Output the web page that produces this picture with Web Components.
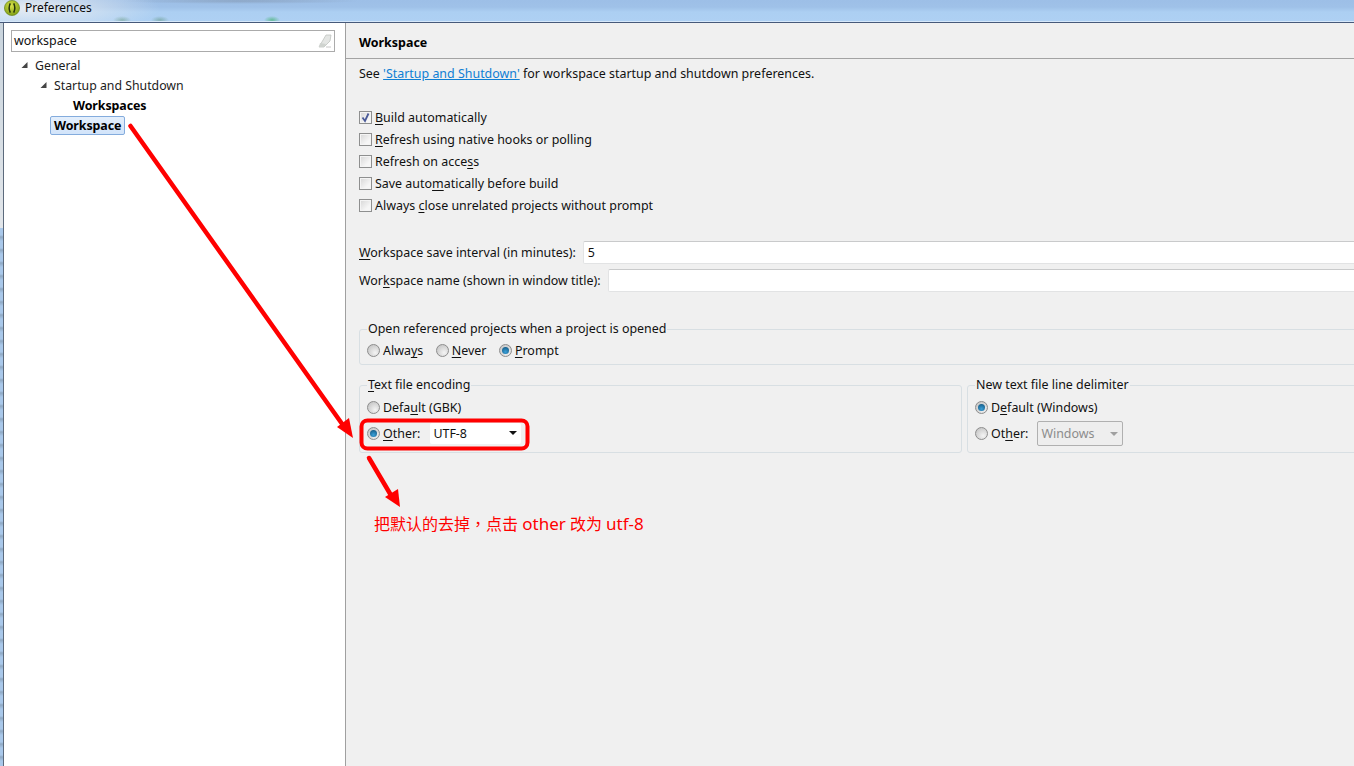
<!DOCTYPE html>
<html>
<head>
<meta charset="utf-8">
<title>Preferences</title>
<style>
html, body { margin: 0; height: 100%; overflow: hidden; background: #f0f0f0; }
body { font: 12.44px "Noto Sans", "Noto Sans CJK SC", sans-serif; color: #111; }
</style>
</head>
<body>
<pref-window>
    <title-bar slot="title">Preferences</title-bar>
    <tree-pane slot="tree">
        <tree-item depth="0" arrow>General</tree-item>
        <tree-item depth="1" arrow>Startup and Shutdown</tree-item>
        <tree-item depth="2" bold>Workspaces</tree-item>
        <tree-item depth="1" bold selected>Workspace</tree-item>
    </tree-pane>
    <pref-page slot="page" heading="Workspace">
        <div class="desc">See <a>'Startup and Shutdown'</a> for workspace startup and shutdown preferences.</div>
        <div class="checks">
            <check-row checked><u>B</u>uild automatically</check-row>
            <check-row><u>R</u>efresh using native hooks or polling</check-row>
            <check-row>Refresh on acce<u>s</u>s</check-row>
            <check-row>Save auto<u>m</u>atically before build</check-row>
            <check-row>Always <u>c</u>lose unrelated projects without prompt</check-row>
        </div>
        <div class="fields">
            <field-row value="5"><u>W</u>orkspace save interval (in minutes):</field-row>
            <field-row>Wor<u>k</u>space name (shown in window title):</field-row>
        </div>
        <group-box label="Open referenced projects when a project is opened" class="open-group">
            <div class="inline">
                <radio-row>Alwa<u>y</u>s</radio-row>
                <radio-row><u>N</u>ever</radio-row>
                <radio-row checked><u>P</u>rompt</radio-row>
            </div>
        </group-box>
        <div class="pair">
            <group-box label="Text file encoding" mnemonic="T">
                <radio-row class="top">Defa<u>u</u>lt (GBK)</radio-row>
                <div class="other enc">
                    <radio-row checked><u>O</u>ther:</radio-row>
                    <combo-box value="UTF-8"></combo-box>
                </div>
            </group-box>
            <group-box label="New text file line delimiter">
                <radio-row class="top" checked>D<u>e</u>fault (Windows)</radio-row>
                <div class="other delim">
                    <radio-row>Ot<u>h</u>er:</radio-row>
                    <combo-box value="Windows" disabled></combo-box>
                </div>
            </group-box>
        </div>
    </pref-page>
    <note-overlay slot="overlay">把默认的去掉<span style='font-family:"Noto Sans CJK TC",sans-serif'>，</span>点击 <span style="font-size:17px">other</span> 改为 <span style="font-size:17px">utf-8</span></note-overlay>
</pref-window>

<script>
class PrefWindow extends HTMLElement {
    constructor() {
        super();
        this.attachShadow({ mode: 'open' }).innerHTML = `
            <style>
            :host {
                display: grid;
                grid-template-rows: 22px 1px 1fr;
                height: 766px;
                width: 1354px;
                position: relative;
                overflow: hidden;
            }
            .rule { background: #46597a; }
            .body {
                display: grid;
                grid-template-columns: 3px 1px 341px 1px 1fr;
                min-height: 0;
            }
            .frame {
                background:
                    repeating-linear-gradient(180deg, #a9c8ea 0 7px, #8fa9c4 9px, #a9c8ea 13px) 0 205px no-repeat,
                    linear-gradient(180deg, #c9d4dd, #e2e6ea);
                background-size: 100% 100%, 100% 205px;
            }
            .line { background: #5c6a7c; }
            .sash { background: #a0a0a0; }
            </style>
            <slot name="title"></slot>
            <div class="rule"></div>
            <div class="body">
                <div class="frame"></div>
                <div class="line"></div>
                <slot name="tree"></slot>
                <div class="sash"></div>
                <slot name="page"></slot>
            </div>
            <slot name="overlay"></slot>
        `;
    }
}

class TitleBar extends HTMLElement {
    constructor() {
        super();
        this.attachShadow({ mode: 'open' }).innerHTML = `
            <style>
            :host {
                display: flex;
                align-items: center;
                gap: 5px;
                padding: 0 0 6px 4px;
                box-sizing: border-box;
                height: 22px;
                color: #0c0c0c;
                font-size: 12px;
                border-bottom: 1px solid #d6e8fa;
                background:
                    radial-gradient(ellipse 130px 26px at 30px 8px, rgba(238,240,242,.9), rgba(238,240,242,0)),
                    radial-gradient(ellipse 9px 4px at 122px 20px, rgba(70,130,90,.45), rgba(70,130,90,0)),
                    radial-gradient(ellipse 9px 4px at 160px 20px, rgba(70,130,90,.4), rgba(70,130,90,0)),
                    radial-gradient(ellipse 8px 4px at 272px 20px, rgba(40,170,80,.55), rgba(40,170,80,0)),
                    radial-gradient(ellipse 120px 3px at 240px 1px, rgba(110,120,135,.35), rgba(110,120,135,0)),
                    linear-gradient(180deg, #9dbfe7 0, #9fc1e8 7px, #accff2 12px, #aed0f3 100%);
            }
            svg { flex: none; }
            </style>
            <svg width="16" height="16" viewBox="0 0 16 16">
                <defs>
                    <radialGradient id="g" cx="45%" cy="35%" r="65%">
                        <stop offset="0" stop-color="#d8e24a"/>
                        <stop offset="1" stop-color="#7f9e14"/>
                    </radialGradient>
                </defs>
                <circle cx="8" cy="8" r="7.6" fill="url(#g)" stroke="#5f7d12" stroke-width=".6"/>
                <path d="M6.3 3.4Q4 8 6.3 12.6M9.7 3.4Q12 8 9.7 12.6" fill="none" stroke="#26340a" stroke-width="1.5"/>
            </svg>
            <span><slot></slot></span>
        `;
    }
}

class TreePane extends HTMLElement {
    constructor() {
        super();
        this.attachShadow({ mode: 'open' }).innerHTML = `
            <style>
            :host {
                display: block;
                background: #fff;
                padding: 7px 10px 0 7px;
                box-sizing: border-box;
                min-height: 0;
            }
            .search {
                display: flex;
                align-items: center;
                justify-content: space-between;
                height: 22px;
                box-sizing: border-box;
                border: 1px solid #ababab;
                padding: 0 2px 1px 2px;
                margin-bottom: 3px;
                color: #111;
            }
            svg { display: block; }
            </style>
            <div class="search">
                <span>workspace</span>
                <svg width="14" height="14" viewBox="0 0 14 14">
                    <path d="M8 1h5l-1 6-6 6H1z" fill="#e4e6e4" stroke="#bfc3bf" stroke-width=".8"/>
                    <path d="M2 9l6 1-2 3H1z" fill="#cfd3cf"/>
                    <path d="M8 13h5" stroke="#c8c8c8"/>
                </svg>
            </div>
            <slot></slot>
        `;
    }
}

class TreeItem extends HTMLElement {
    constructor() {
        super();
        this.attachShadow({ mode: 'open' });
    }

    connectedCallback() {
        const depth = Number(this.getAttribute('depth') || 0);
        this.shadowRoot.innerHTML = `
            <style>
            :host {
                display: flex;
                align-items: center;
                height: 20px;
                padding-left: ${10 + depth * 19}px;
                color: #1c1c1c;
                font-size: 12.3px;
                white-space: nowrap;
            }
            :host([bold]) { font-size: 12.44px; }
            .arrow { width: 10px; flex: none; }
            svg { display: block; }
            .label {
                box-sizing: border-box;
                padding: 0 3px;
                height: 19px;
                line-height: 17px;
                border: 1px solid transparent;
                border-radius: 2px;
            }
            :host([bold]) .label { font-weight: 700; color: #000; letter-spacing: -.1px; }
            :host([selected]) .label {
                border-color: #84acdd;
                background: linear-gradient(180deg, #e4effc, #d2e4fa);
            }
            </style>
            <span class="arrow">${this.hasAttribute('arrow') ? `
                <svg width="8" height="8" viewBox="0 0 8 8"><path d="M6.5 1v6h-6z" fill="#444"/></svg>` : ''}</span>
            <span class="label"><slot></slot></span>
        `;
    }
}

class PrefPage extends HTMLElement {
    constructor() {
        super();
        this.attachShadow({ mode: 'open' });
    }

    connectedCallback() {
        this.shadowRoot.innerHTML = `
            <style>
            :host {
                display: block;
                background: #f0f0f0;
                min-height: 0;
                overflow: hidden;
            }
            .head {
                height: 36px;
                box-sizing: border-box;
                padding: 4px 0 0 13px;
                display: flex;
                align-items: center;
                font-weight: 700;
                color: #000;
                border-bottom: 1px solid #a3a3a3;
            }
            .content { padding: 0 0 0 13px; }
            ::slotted(.desc) { height: 20px; line-height: 20px; margin-top: 5px; white-space: nowrap; }
            ::slotted(.checks) { margin-top: 22px; }
            ::slotted(.fields) { margin-top: 25px; display: grid; gap: 5px; }
            ::slotted(.open-group) { margin-top: 29px; }
            ::slotted(.pair) {
                margin-top: 12px;
                display: grid;
                grid-template-columns: 603px 500px;
                gap: 5px;
            }
            </style>
            <div class="head">${this.getAttribute('heading')}</div>
            <div class="content"><slot></slot></div>
        `;
    }
}

class CheckRow extends HTMLElement {
    constructor() {
        super();
        this.attachShadow({ mode: 'open' }).innerHTML = `
            <style>
            :host {
                display: flex;
                align-items: center;
                gap: 3px;
                height: 22px;
                white-space: nowrap;
            }
            .box {
                width: 13px;
                height: 13px;
                box-sizing: border-box;
                border: 1px solid #8e8f8f;
                background: linear-gradient(135deg, #d6d6d6, #f6f6f6 70%);
                box-shadow: inset 0 0 0 1px #f4f4f4;
                display: block;
            }
            svg { display: none; }
            :host([checked]) svg { display: block; }
            </style>
            <span class="box"><svg width="11" height="11" viewBox="0 0 11 11">
                <path d="M2.5 5.5L5 9 8.5 1.5" fill="none" stroke="#4a5a98" stroke-width="1.8"/>
            </svg></span>
            <span><slot></slot></span>
        `;
    }
}

class RadioRow extends HTMLElement {
    constructor() {
        super();
        this.attachShadow({ mode: 'open' }).innerHTML = `
            <style>
            :host {
                display: inline-flex;
                align-items: center;
                gap: 3px;
                white-space: nowrap;
                height: 20px;
            }
            .dot {
                width: 13px;
                height: 13px;
                box-sizing: border-box;
                border-radius: 50%;
                border: 1px solid #8d8d8d;
                background: radial-gradient(circle at 65% 70%, #f4f4f4, #bcbcbc);
                display: flex;
                align-items: center;
                justify-content: center;
            }
            .dot i {
                display: none;
                width: 7px;
                height: 7px;
                border-radius: 50%;
                background: radial-gradient(circle at 50% 70%, #3aa0d8, #0f4f78);
            }
            :host([checked]) .dot i { display: block; }
            </style>
            <span class="dot"><i></i></span>
            <span><slot></slot></span>
        `;
    }
}

class FieldRow extends HTMLElement {
    constructor() {
        super();
        this.attachShadow({ mode: 'open' });
    }

    connectedCallback() {
        this.shadowRoot.innerHTML = `
            <style>
            :host {
                display: flex;
                align-items: center;
                gap: 7px;
                height: 23px;
                white-space: nowrap;
            }
            .input {
                flex: 1;
                height: 23px;
                box-sizing: border-box;
                background: #fff;
                border: 1px solid #e2e3e4;
                border-top-color: #c9cacb;
                border-radius: 2px;
                padding: 0 4px;
                line-height: 21px;
                margin-right: -6px;
            }
            </style>
            <span><slot></slot></span>
            <span class="input">${this.getAttribute('value') || ''}</span>
        `;
    }
}

class GroupBox extends HTMLElement {
    constructor() {
        super();
        this.attachShadow({ mode: 'open' });
    }

    connectedCallback() {
        let text = this.getAttribute('label');
        const key = this.getAttribute('mnemonic');
        if (key) text = text.replace(key, `<u>${key}</u>`);
        this.shadowRoot.innerHTML = `
            <style>
            :host { display: block; min-width: 0; }
            fieldset {
                margin: 0;
                padding: 3px 7px 0;
                border: 1px solid #d8dfe3;
                border-radius: 3px;
                min-width: 0;
            }
            :host(.open-group) fieldset { margin-right: -6px; }
            legend {
                padding: 0 1px;
                height: 16px;
                line-height: 16px;
                white-space: nowrap;
            }
            u { text-decoration-skip-ink: none; text-underline-offset: 2px; }
            ::slotted(.inline) { display: flex; gap: 12.5px; height: 20px; align-items: center; margin-bottom: 4px; }
            ::slotted(.top) { display: flex; height: 20px; margin-top: 1px; }
            ::slotted(.other) { display: flex; align-items: center; height: 25px; margin: 4px 0 6px; }
            ::slotted(.enc) { gap: 10px; }
            ::slotted(.delim) { gap: 9px; }
            </style>
            <fieldset>
                <legend>${text}</legend>
                <slot></slot>
            </fieldset>
        `;
    }
}

class ComboBox extends HTMLElement {
    constructor() {
        super();
        this.attachShadow({ mode: 'open' });
    }

    connectedCallback() {
        this.shadowRoot.innerHTML = `
            <style>
            :host {
                display: flex;
                align-items: center;
                justify-content: space-between;
                box-sizing: border-box;
                width: 91px;
                height: 21px;
                padding: 0 4px 1px 3px;
                background: #fff;
                border-radius: 2px;
                color: #111;
            }
            :host([disabled]) {
                width: 86px;
                height: 25px;
                padding-bottom: 0;
                background: #eeeeee;
                border: 1px solid #b0b0b0;
                color: #8c8c8c;
            }
            i {
                width: 0;
                height: 0;
                border: 4px solid transparent;
                border-top: 4px solid #111;
                border-bottom: 0;
            }
            :host([disabled]) i { border-top-color: #a0a0a0; }
            </style>
            <span>${this.getAttribute('value')}</span>
            <i></i>
        `;
    }
}

class NoteOverlay extends HTMLElement {
    constructor() {
        super();
        this.attachShadow({ mode: 'open' }).innerHTML = `
            <style>
            :host { position: absolute; inset: 0; pointer-events: none; }
            svg { position: absolute; left: 0; top: 0; }
            .note {
                position: absolute;
                left: 374px;
                top: 512px;
                color: #ff0000;
                font: 16px/22px "Noto Sans", "Noto Sans CJK SC", sans-serif;
                white-space: nowrap;
            }
            </style>
            <svg width="1354" height="766">
                <rect x="361.5" y="420.5" width="166" height="28" rx="6" fill="none" stroke="#ff0000" stroke-width="4"/>
                <g fill="none" stroke="#ff0000" stroke-width="4.5" stroke-linecap="round">
                    <path d="M130.5 126L345 428"/>
                    <path d="M369 458L392 497"/>
                </g>
                <g fill="#ff0000">
                    <path d="M353 438L337 427 349 418z"/>
                    <path d="M400 507L385 497 398 489z"/>
                </g>
            </svg>
            <div class="note"><slot></slot></div>
        `;
    }
}

customElements.define('pref-window', PrefWindow);
customElements.define('title-bar', TitleBar);
customElements.define('tree-pane', TreePane);
customElements.define('tree-item', TreeItem);
customElements.define('pref-page', PrefPage);
customElements.define('check-row', CheckRow);
customElements.define('radio-row', RadioRow);
customElements.define('field-row', FieldRow);
customElements.define('group-box', GroupBox);
customElements.define('combo-box', ComboBox);
customElements.define('note-overlay', NoteOverlay);
</script>
<style>
a { color: #0f7fd4; text-decoration: underline; }
u { text-decoration-skip-ink: none; text-underline-offset: 2px; }
</style>
</body>
</html>
